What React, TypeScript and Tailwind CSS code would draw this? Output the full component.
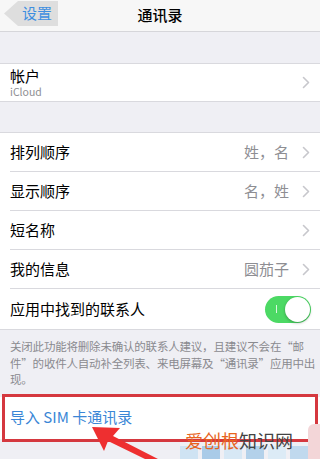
import React from "react";

const cjk = "font-['Noto_Sans_CJK_SC','Noto_Sans',sans-serif]";

function Chevron() {
  return (
    <svg width="8" height="13" viewBox="0 0 8 13" className="shrink-0">
      <path d="M1.5 1.5 L6.5 6.5 L1.5 11.5" fill="none" stroke="#c7c7cc" strokeWidth="1.6" strokeLinecap="round" strokeLinejoin="round" />
    </svg>
  );
}

function Row({ label, value, last }: { label: string; value?: string; last?: boolean }) {
  return (
    <div className="flex h-[39px] items-stretch pl-[10px] bg-white">
      <div className={`flex flex-1 items-center pr-[10px] ${last ? "" : "border-b border-[#d9d9de]"}`}>
        <span className="flex-1 text-[15px] text-black">{label}</span>
        {value && <span className="mr-[13px] text-[15px] text-[#8e8e93]">{value}</span>}
        <Chevron />
      </div>
    </div>
  );
}

export default function App() {
  return (
    <div className={`relative flex h-[459px] w-[320px] flex-col overflow-hidden bg-[#efeff4] ${cjk}`}>
      {/* nav bar */}
      <div className="grid h-[32px] grid-cols-[1fr_auto_1fr] items-center border-b border-[#d6d6da] bg-[#f7f7f7]">
        <div className="flex h-full items-start pl-[4px] pt-[1px]">
          <span className="flex h-[25px] w-[54px] items-center justify-end pr-[6px] bg-[#dedede] [clip-path:polygon(0_50%,14px_0,100%_0,100%_100%,14px_100%)] text-[15px] text-[#3f8fe0]">
            设置
          </span>
        </div>
        <span className="text-[15px] font-medium text-black">通讯录</span>
        <div />
      </div>

      <div className="h-[31px] shrink-0" />

      {/* account */}
      <div className="flex h-[39px] shrink-0 items-center border-y border-[#d9d9de] bg-white pl-[10px] pr-[10px]">
        <div className="flex flex-1 flex-col">
          <span className="text-[15px] leading-[17px] text-black">帐户</span>
          <span className="mt-[2px] text-[10.5px] leading-[12px] text-[#8e8e93]">iCloud</span>
        </div>
        <Chevron />
      </div>

      <div className="h-[30px] shrink-0" />

      {/* settings group */}
      <div className="shrink-0 border-y border-[#d9d9de]">
        <Row label="排列顺序" value="姓，名" />
        <Row label="显示顺序" value="名，姓" />
        <Row label="短名称" />
        <Row label="我的信息" value="圆茄子" />
        <div className="flex h-[40px] items-center bg-white pl-[10px] pr-[9px]">
          <span className="flex-1 text-[15px] text-black">应用中找到的联系人</span>
          <div className="flex h-[27px] w-[46px] items-center justify-between rounded-full bg-[#4cd964] pl-[11px] pr-[1px]">
            <span className="h-[8px] w-[1px] bg-white/80" />
            <span className="h-[25px] w-[25px] rounded-full bg-white shadow-[0_1px_3px_rgba(0,0,0,0.3)]" />
          </div>
        </div>
      </div>

      {/* footer note */}
      <div className="shrink-0 px-[10px] pt-[8px] pb-[9px] text-[11.5px] leading-[16.5px] tracking-[-0.2px] text-[#8a8a8f] whitespace-nowrap">
        <div>关闭此功能将删除未确认的联系人建议，且建议不会在“邮</div>
        <div>件”的收件人自动补全列表、来电屏幕及“通讯录”应用中出</div>
        <div>现。</div>
      </div>

      {/* import SIM */}
      <div className="relative shrink-0">
        <div className="flex h-[42px] items-center bg-white pl-[10px] text-[15px] text-[#3a86d6]">
          导入 SIM 卡通讯录
        </div>
        <div className="pointer-events-none absolute -top-[3px] -bottom-[3px] left-[2px] right-[2px] border-[3px] border-[#d5383f]" />
      </div>

      {/* watermark */}
      <div className="pointer-events-none absolute left-[180px] top-[446px] flex gap-[4px]">
        <span className="h-[13px] w-[18px] bg-[#cfe3f3]" />
        <span className="h-[13px] w-[18px] bg-[#a9cbe8]" />
        <span className="h-[13px] w-[18px] bg-[#d7e8f5]" />
        <span className="h-[13px] w-[18px] bg-[#b3d1ea]" />
        <span className="h-[13px] w-[18px] bg-[#dcebf6]" />
        <span className="h-[13px] w-[18px] bg-[#c0d9ee]" />
      </div>
      <div className="pointer-events-none absolute right-0 top-[424px] h-[35px] w-[12px] rounded-tl-[6px] bg-[#f3d6d8]" />
      <div className="pointer-events-none absolute left-[185px] top-[431px] text-[18px] leading-none">
        <span className="text-[#e8641e]">爱创根</span>
        <span className="text-[#444]">知识网</span>
      </div>

      {/* red arrow */}
      <svg className="pointer-events-none absolute left-0 top-0" width="320" height="459" viewBox="0 0 320 459">
        <path d="M92 427 L120 428 L113 436 L158 459 L145 459 L108 441 L104 451 Z" fill="#ee2f30" />
      </svg>
    </div>
  );
}
